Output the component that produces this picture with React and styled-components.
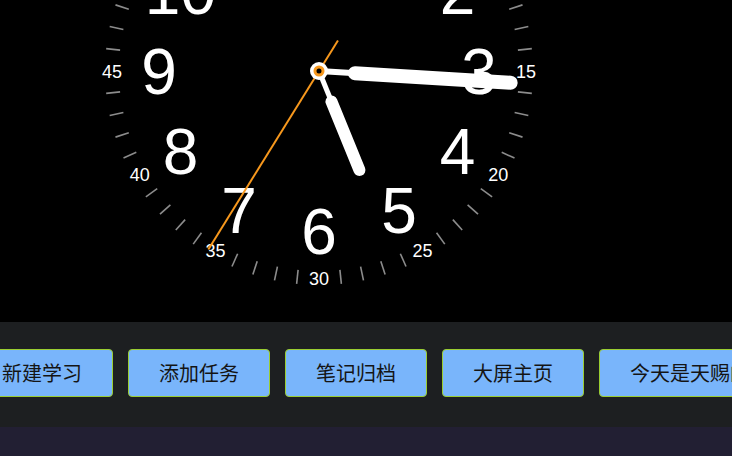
import React from "react";
import styled, { createGlobalStyle } from "styled-components";

const GlobalStyle = createGlobalStyle`
  html, body { margin: 0; padding: 0; background: #000; }
  body { font-family: "Liberation Sans", "Noto Sans CJK SC", sans-serif; }
  #root { min-height: 100vh; }
`;

const Page = styled.div`
  min-height: 100vh;
  display: flex;
  flex-direction: column;
  background: #000;
`;

const ClockPanel = styled.section`
  height: 322px;
  background: #000;
  overflow: hidden;
`;

const Dial = styled.svg`
  display: block;
  width: 732px;
  height: 322px;
`;

const Tick = styled.line`
  stroke: #8c8c8c;
  stroke-width: 1.6;
`;

const HourNumber = styled.text`
  fill: #fff;
  font-family: "Liberation Sans", Arial, sans-serif;
  font-size: 64px;
`;

const MinuteLabel = styled.text`
  fill: #fff;
  font-family: "Liberation Sans", Arial, sans-serif;
  font-size: 18px;
`;

const Hand = styled.line`
  stroke: ${(p) => p.$color || "#fff"};
  stroke-width: ${(p) => p.$width}px;
  stroke-linecap: ${(p) => p.$cap || "round"};
`;

const ActionBar = styled.nav`
  height: 105px;
  box-sizing: border-box;
  padding-top: 27px;
  background: #1d1f21;
  overflow: hidden;
`;

const ButtonRow = styled.div`
  display: flex;
  gap: 15px;
  margin-left: -29px;
`;

const ActionButton = styled.button`
  flex-shrink: 0;
  height: 48px;
  padding: 0 30px;
  border: 1px solid #9acd32;
  border-radius: 4px;
  background: #79b5fb;
  color: #141414;
  font-family: "Noto Sans CJK SC", "Liberation Sans", sans-serif;
  font-size: 20px;
  line-height: 46px;
  white-space: nowrap;
  cursor: pointer;
`;

const FooterStrip = styled.div`
  flex: 1;
  background: #221f33;
`;

const CX = 319;
const CY = 71;

const polar = (deg, r) => {
  const a = (deg * Math.PI) / 180;
  return [CX + r * Math.sin(a), CY - r * Math.cos(a)];
};

function Clock() {
  const ticks = [];
  for (let m = 0; m < 60; m++) {
    if (m % 5 === 0) continue;
    const [x1, y1] = polar(m * 6, 200);
    const [x2, y2] = polar(m * 6, 214);
    ticks.push(<Tick key={m} x1={x1} y1={y1} x2={x2} y2={y2} />);
  }
  const hours = [];
  for (let h = 1; h <= 12; h++) {
    const [x, y] = polar(h * 30, 160);
    hours.push(
      <HourNumber key={h} x={x} y={y + 23} textAnchor="middle">
        {h}
      </HourNumber>
    );
  }
  const minutes = [];
  for (let m = 5; m <= 60; m += 5) {
    const [x, y] = polar(m * 6, 207);
    minutes.push(
      <MinuteLabel key={m} x={x} y={y + 6.5} textAnchor="middle">
        {m}
      </MinuteLabel>
    );
  }

  const hourDeg = 157.8;
  const minDeg = 93.5;
  const secDeg = 211.8;

  const [hx0, hy0] = polar(hourDeg, 33);
  const [hx1, hy1] = polar(hourDeg, 107);
  const [ht, hty] = polar(hourDeg, 34);
  const [mx0, my0] = polar(minDeg, 36);
  const [mx1, my1] = polar(minDeg, 192);
  const [mt, mty] = polar(minDeg, 37);
  const [sx0, sy0] = polar(secDeg, -36);
  const [sx1, sy1] = polar(secDeg, 210);

  return (
    <Dial viewBox="0 0 732 322">
      {ticks}
      {minutes}
      {hours}
      <Hand x1={CX} y1={CY} x2={ht} y2={hty} $width={5} $cap="butt" />
      <Hand x1={hx0} y1={hy0} x2={hx1} y2={hy1} $width={12} />
      <Hand x1={CX} y1={CY} x2={mt} y2={mty} $width={6} $cap="butt" />
      <Hand x1={mx0} y1={my0} x2={mx1} y2={my1} $width={14} />
      <Hand x1={sx0} y1={sy0} x2={sx1} y2={sy1} $width={2} $cap="butt" $color="#f7981d" />
      <circle cx={CX} cy={CY} r={9} fill="#fff" />
      <circle cx={CX} cy={CY} r={4} fill="#000" stroke="#f7981d" strokeWidth={3} />
    </Dial>
  );
}

const actions = ["新建学习", "添加任务", "笔记归档", "大屏主页", "今天是天赐的礼物"];

export default function App() {
  return (
    <Page>
      <GlobalStyle />
      <ClockPanel>
        <Clock />
      </ClockPanel>
      <ActionBar>
        <ButtonRow>
          {actions.map((a) => (
            <ActionButton key={a}>{a}</ActionButton>
          ))}
        </ButtonRow>
      </ActionBar>
      <FooterStrip />
    </Page>
  );
}
